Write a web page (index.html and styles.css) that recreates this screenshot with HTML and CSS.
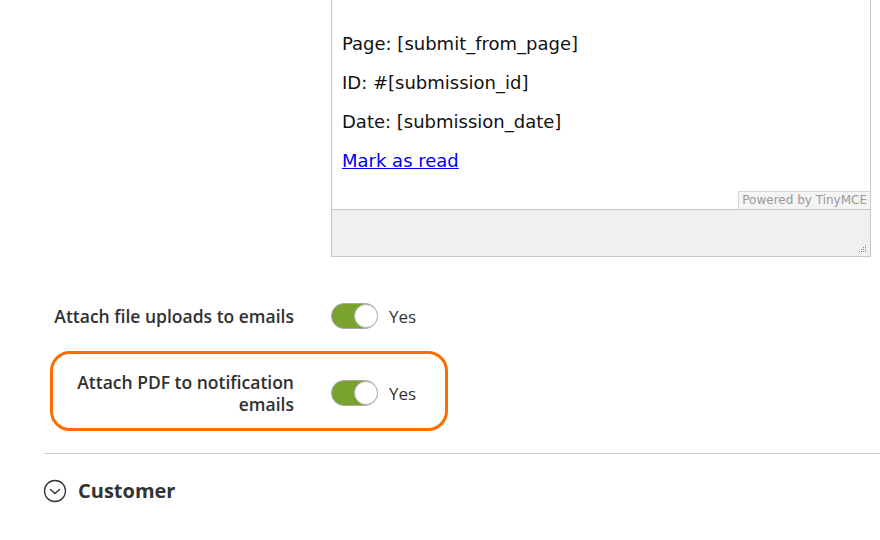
FILE: index.html
```html
<!DOCTYPE html>
<html>
<head>
<meta charset="utf-8">
<link rel="stylesheet" href="styles.css">
</head>
<body>
<div class="editor">
  <div class="editor-body">
    <p>Page: [submit_from_page]</p>
    <p>ID: #[submission_id]</p>
    <p>Date: [submission_date]</p>
    <p><a href="#">Mark as read</a></p>
    <div class="powered-row"><span class="powered">Powered by TinyMCE</span></div>
  </div>
  <div class="statusbar">
    <svg class="resize" width="8" height="8" viewBox="0 0 8 8">
      <rect x="6" y="0" width="1" height="1" fill="#888"/>
      <rect x="6" y="2" width="1" height="1" fill="#888"/>
      <rect x="4" y="2" width="1" height="1" fill="#888"/>
      <rect x="6" y="4" width="1" height="1" fill="#888"/>
      <rect x="4" y="4" width="1" height="1" fill="#888"/>
      <rect x="2" y="4" width="1" height="1" fill="#888"/>
      <rect x="6" y="6" width="1" height="1" fill="#888"/>
      <rect x="4" y="6" width="1" height="1" fill="#888"/>
      <rect x="2" y="6" width="1" height="1" fill="#888"/>
      <rect x="0" y="6" width="1" height="1" fill="#888"/>
    </svg>
  </div>
</div>

<div class="fields">
  <div class="field">
    <div class="label">Attach file uploads to emails</div>
    <div class="control"><span class="toggle"><span class="knob"></span></span><span class="yes">Yes</span></div>
  </div>
  <div class="field highlight">
    <div class="label">Attach PDF to notification emails</div>
    <div class="control"><span class="toggle"><span class="knob"></span></span><span class="yes">Yes</span></div>
  </div>
</div>

<div class="section">
  <div class="section-title">
    <svg class="chev" width="24" height="24" viewBox="0 0 24 24">
      <circle cx="12" cy="12" r="10.5" fill="none" stroke="#333" stroke-width="1.3"/>
      <path d="M7.5 10.5 L12 14.5 L16.5 10.5" fill="none" stroke="#333" stroke-width="1.4" stroke-linecap="round" stroke-linejoin="round"/>
    </svg>
    <span>Customer</span>
  </div>
</div>
</body>
</html>
```

FILE: styles.css
```css
html, body {
  margin: 0;
  padding: 0;
  background: #fff;
}
body {
  width: 880px;
  height: 540px;
  overflow: hidden;
  font-family: "Open Sans", "Liberation Sans", sans-serif;
  color: #303030;
}
.editor {
  margin-left: 331px;
  width: 538px;
  border: 1px solid #c8c8c8;
  border-top: none;
}
.editor-body {
  height: 209px;
  box-sizing: border-box;
  padding: 34px 0 0 10px;
  font-family: "DejaVu Sans", Verdana, sans-serif;
  font-size: 18px;
  color: #111;
  display: flex;
  flex-direction: column;
}
.editor-body p {
  margin: 0 0 19px;
  line-height: 20px;
}
.editor-body a {
  color: #0000ee;
}
.powered-row {
  margin-top: auto;
  display: flex;
  justify-content: flex-end;
}
.powered {
  font-family: "DejaVu Sans", sans-serif;
  font-size: 12px;
  color: #9a9a9a;
  background: #f4f4f4;
  border-top: 1px solid #d5d5d5;
  border-left: 1px solid #d5d5d5;
  padding: 0 3px;
  height: 17px;
  line-height: 17px;
}
.statusbar {
  height: 47px;
  background: #f0f0f0;
  border-top: 1px solid #c8c8c8;
  display: flex;
  justify-content: flex-end;
  align-items: flex-end;
  padding: 0 3px 3px 0;
  box-sizing: border-box;
}
.fields {
  margin: 30px 0 0 50px;
  width: 398px;
  display: flex;
  flex-direction: column;
  gap: 6px;
}
.field {
  display: flex;
  align-items: center;
  border: 3px solid transparent;
  border-radius: 20px;
  padding: 13px 0;
}
.field.highlight {
  border-color: #ff6d00;
  padding: 17px 0 13px;
}
.label {
  width: 241px;
  flex: none;
  text-align: right;
  font-size: 17.5px;
  font-weight: 600;
  line-height: 22px;
  color: #303030;
  margin-right: 37px;
}
.field.highlight .label {
  padding-left: 20px;
  box-sizing: border-box;
}
.control {
  display: flex;
  align-items: center;
}
.toggle {
  width: 47px;
  height: 26px;
  box-sizing: border-box;
  border-radius: 13px;
  background: #79a22e;
  border: 1px solid #a8a8a8;
  display: flex;
  justify-content: flex-end;
  align-items: center;
}
.knob {
  width: 24px;
  height: 24px;
  border-radius: 50%;
  background: #fff;
  box-sizing: border-box;
  border: 1px solid #b5b5b5;
  margin-right: -1px;
}
.yes {
  margin-left: 11px;
  font-size: 17px;
  color: #333;
}
.section {
  margin: 22px 0 0 44px;
  border-top: 1px solid #cccccc;
}
.section-title {
  display: flex;
  align-items: center;
  padding-top: 23px;
  margin-left: -1px;
}
.section-title span {
  margin-left: 11px;
  font-size: 20px;
  font-weight: 700;
  color: #333;
}
```
